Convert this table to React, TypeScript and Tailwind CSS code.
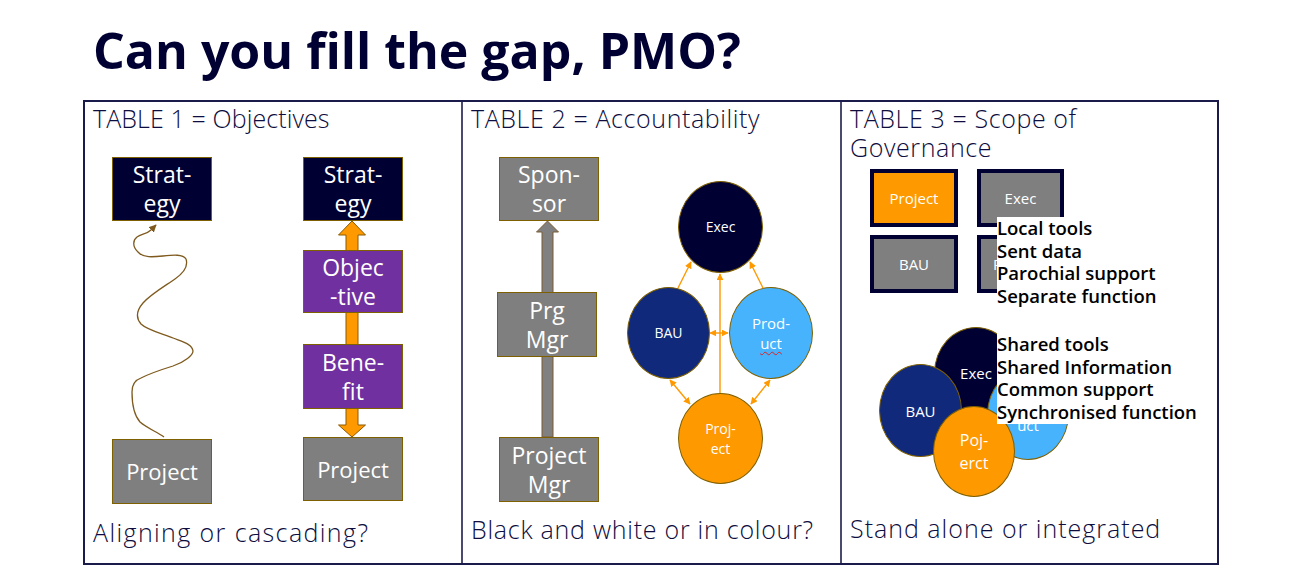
import React from "react";

function Box({
  l, t, w, h, bg, children, size = "text-[23px]", lh = "leading-[29px]",
}: { l: number; t: number; w: number; h: number; bg: string; children: React.ReactNode; size?: string; lh?: string }) {
  return (
    <div
      className={`absolute flex items-center justify-center text-center text-white border border-[#7f6000] ${size} ${lh} ${bg}`}
      style={{ left: l, top: t, width: w, height: h }}
    >
      <div>{children}</div>
    </div>
  );
}

function Circle({
  l, t, w, h, bg, children, size = "text-[14px]", lh = "leading-[22px]",
}: { l: number; t: number; w: number; h: number; bg: string; children: React.ReactNode; size?: string; lh?: string }) {
  return (
    <div
      className={`absolute rounded-[50%] flex items-center justify-center text-center text-white border border-[#7f6000] ${size} ${lh} ${bg}`}
      style={{ left: l, top: t, width: w, height: h }}
    >
      <div>{children}</div>
    </div>
  );
}

function Square({ bg, children }: { bg: string; children: React.ReactNode }) {
  return (
    <div className={`h-[58px] flex items-center justify-center text-white text-[15px] border-4 border-[#000033] ${bg}`}>
      {children}
    </div>
  );
}

const head = "text-[25px] leading-[29px] font-light text-[#0d0d40] whitespace-nowrap";

function Cell1() {
  return (
    <div className="relative flex flex-col pl-[8px] pt-[2px] pb-[16px]">
      <div className={`${head} tracking-[0.1px]`}>TABLE 1 = Objectives</div>
      <svg className="absolute left-0 top-0 pointer-events-none" width="376" height="461" viewBox="0 0 376 461">
        <defs>
          <marker id="wavehead" viewBox="0 0 10 10" refX="9" refY="5" markerWidth="6" markerHeight="6" orient="auto">
            <path d="M0,0 L10,5 L0,10 z" fill="#7f5a1e" />
          </marker>
        </defs>
        <path
          d="M79,335 C72,330 62,326 55,320 C48,312 47,300 47,290 C47,282 50,278 56,276 C62,273 75,268 88,264 C100,260 108,253 108,249 C107,242 98,240 88,236 C78,232 62,228 56,222 C50,215 52,208 58,201 C66,192 80,184 90,177 C100,170 103,163 101,157 C98,152 88,153 78,154 C68,155 58,156 53,150 C47,144 48,138 52,135 C56,132 62,132 66,128 L71,123"
          fill="none"
          stroke="#7f5a1e"
          strokeWidth="1.3"
          markerEnd="url(#wavehead)"
        />
        <polygon
          points="267,119 280.5,133 273,133 273,323 280.5,323 267,335 253.5,323 261,323 261,133 253.5,133"
          fill="#ff9900"
          stroke="#8a5a00"
          strokeWidth="1"
        />
      </svg>
      <Box l={27} t={55} w={100} h={64} bg="bg-[#000033]">Strat-<br />egy</Box>
      <Box l={218} t={55} w={100} h={64} bg="bg-[#000033]">Strat-<br />egy</Box>
      <Box l={218} t={148} w={100} h={63} bg="bg-[#7030a0]">Objec<br />-tive</Box>
      <Box l={218} t={242} w={100} h={65} bg="bg-[#7030a0]">Bene-<br />fit</Box>
      <Box l={27} t={337} w={100} h={65} bg="bg-[#7f7f7f]" size="text-[22px]">Project</Box>
      <Box l={218} t={335} w={100} h={64} bg="bg-[#7f7f7f]" size="text-[22px]">Project</Box>
      <div className={`mt-auto ${head} tracking-[1.4px]`}>Aligning or cascading?</div>
    </div>
  );
}

function Cell2() {
  return (
    <div className="relative flex flex-col border-l-2 border-[#4a4a70] pl-[8px] pt-[2px] pb-[19px]">
      <div className={`${head} tracking-[0.6px]`}>TABLE 2 = Accountability</div>
      <svg className="absolute left-0 top-0 pointer-events-none" width="377" height="461" viewBox="0 0 377 461">
        <polygon
          points="84.5,119 95.5,130 90,130 90,335 79,335 79,130 73.5,130"
          fill="#808080"
          stroke="#7a5a30"
          strokeWidth="1"
        />
      </svg>
      <Box l={36} t={55} w={100} h={64} bg="bg-[#7f7f7f]">Spon-<br />sor</Box>
      <Box l={34} t={190} w={100} h={65} bg="bg-[#7f7f7f]">Prg<br />Mgr</Box>
      <Box l={36} t={335} w={100} h={65} bg="bg-[#7f7f7f]">Project<br />Mgr</Box>

      <Circle l={215} t={79} w={85} h={92} bg="bg-[#000033]" size="text-[14px]">Exec</Circle>
      <Circle l={164} t={185} w={83} h={92} bg="bg-[#10297b]" size="text-[14px]">BAU</Circle>
      <Circle l={266} t={185} w={84} h={92} bg="bg-[#47b3fc]" size="text-[15px]" lh="leading-[20px]">
        Prod-<br />
        <span className="underline decoration-wavy decoration-[#e02020] decoration-1 underline-offset-2">uct</span>
      </Circle>
      <Circle l={215} t={291} w={85} h={91} bg="bg-[#ff9900]" size="text-[14px]" lh="leading-[20px]">Proj-<br />ect</Circle>

      <svg className="absolute left-0 top-0 pointer-events-none" width="377" height="461" viewBox="0 0 377 461">
        <defs>
          <marker id="oh" viewBox="0 0 10 10" refX="9" refY="5" markerWidth="5" markerHeight="5" orient="auto-start-reverse">
            <path d="M0,0 L10,5 L0,10 z" fill="#ff9900" />
          </marker>
        </defs>
        <g stroke="#ff9900" strokeWidth="1.4" fill="none">
          <line x1="215" y1="186" x2="228" y2="160" markerEnd="url(#oh)" />
          <line x1="300" y1="186" x2="287" y2="160" markerEnd="url(#oh)" />
          <line x1="257" y1="291" x2="257" y2="172" markerEnd="url(#oh)" />
          <line x1="247" y1="231" x2="265" y2="231" markerStart="url(#oh)" markerEnd="url(#oh)" />
          <line x1="207" y1="278" x2="227" y2="302" markerStart="url(#oh)" markerEnd="url(#oh)" />
          <line x1="307" y1="278" x2="288" y2="302" markerStart="url(#oh)" markerEnd="url(#oh)" />
        </g>
      </svg>
      <div className={`mt-auto ${head} tracking-[0.75px]`}>Black and white or in colour?</div>
    </div>
  );
}

function Cell3() {
  const overlay = "absolute bg-white text-black font-semibold text-[18.5px] leading-[22.7px] whitespace-nowrap";
  return (
    <div className="relative flex flex-col border-l-2 border-[#4a4a70] pl-[8px] pt-[2px] pb-[20px]">
      <div className={`${head} tracking-[0.6px]`}>
        TABLE 3 = Scope of<br />Governance
      </div>
      <div className="absolute left-[28px] top-[67px] grid grid-cols-[88px_87px] gap-x-[19px] gap-y-[8px]">
        <Square bg="bg-[#ff9900]">Project</Square>
        <Square bg="bg-[#7f7f7f]">Exec</Square>
        <Square bg="bg-[#7f7f7f]">BAU</Square>
        <Square bg="bg-[#7f7f7f]">Product</Square>
      </div>
      <div className={overlay} style={{ left: 155, top: 115 }}>
        Local tools<br />Sent data<br />Parochial support<br />Separate function
      </div>

      <Circle l={92} t={225} w={84} h={92} bg="bg-[#000033]" size="text-[15px]">Exec</Circle>
      <Circle l={145} t={266} w={82} h={92} bg="bg-[#47b3fc]" size="text-[15px]" lh="leading-[22px]">Prod-<br />uct</Circle>
      <Circle l={37} t={262} w={83} h={93} bg="bg-[#10297b]" size="text-[15px]">BAU</Circle>
      <Circle l={91} t={304} w={82} h={91} bg="bg-[#ff9900]" size="text-[16px]" lh="leading-[23px]">Poj-<br />erct</Circle>
      <div className={overlay} style={{ left: 155, top: 231 }}>
        Shared tools<br />Shared Information<br />Common support<br />Synchronised function
      </div>
      <div className={`mt-auto ${head} tracking-[1px]`}>Stand alone or integrated</div>
    </div>
  );
}

export default function App() {
  return (
    <div className="w-[1297px] h-[585px] bg-white overflow-hidden font-['Open_Sans',sans-serif]">
      <div className="h-[100px] pt-[20px] pl-[93px]">
        <h1 className="text-[50px] leading-[60px] font-bold text-[#000033] whitespace-nowrap">Can you fill the gap, PMO?</h1>
      </div>
      <div className="ml-[83px] w-[1136px] h-[465px] border-2 border-[#1b1b4b] grid grid-cols-[376px_379px_377px]">
        <Cell1 />
        <Cell2 />
        <Cell3 />
      </div>
    </div>
  );
}
